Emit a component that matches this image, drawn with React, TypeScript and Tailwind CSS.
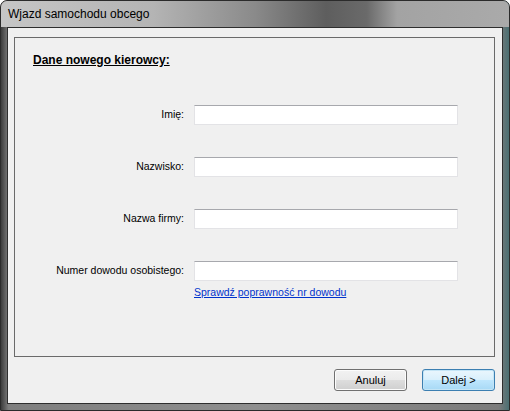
import React from 'react';

const font = { fontFamily: '"Liberation Sans", Arial, sans-serif' };

const Field = ({ label, children }: { label: string; children?: React.ReactNode }) => (
  <div className="flex items-start">
    <div className="w-[169px] h-[20px] flex items-center justify-end text-[10.5px] text-black">{label}</div>
    <div className="ml-[10px] flex flex-col">
      <div className="w-[264px] h-[20px] bg-white border border-[#e3e3e6] border-t-[#a7a8ad]" />
      {children}
    </div>
  </div>
);

const Button = ({ label, primary }: { label: string; primary?: boolean }) => (
  <button
    className={
      'w-[73px] h-[22px] rounded-[3px] border text-[11px] text-black ' +
      (primary
        ? 'border-[#3c7fb1] bg-[linear-gradient(to_bottom,#eaf6fd_0%,#d9f0fc_48%,#bee6fd_52%,#a7d9f5_100%)] shadow-[inset_0_0_0_1px_#c4e5f6]'
        : 'border-[#707070] bg-[linear-gradient(to_bottom,#f2f2f2_0%,#ebebeb_48%,#dddddd_52%,#cfcfcf_100%)] shadow-[inset_0_0_0_1px_#fcfcfc]')
    }
  >
    {label}
  </button>
);

export default function App() {
  return (
    <div style={font} className="w-[510px] h-[411px] overflow-hidden">
      <div className="w-full h-full flex flex-col rounded-t-[7px] border border-[#2b2b2b] bg-[linear-gradient(to_right,#3c3c3c_0%,#7e7e7e_1.5%,#8f8f8f_50%,#7c7c7c_98%,#4a6f72_100%)]">
        {/* title bar */}
        <div className="h-[26px] flex items-center pl-[7px] rounded-t-[6px] bg-[linear-gradient(to_right,#c6c6c6_0%,#b4b4b4_30%,#8a8a8a_50%,#5e5e5e_64%,#6a6a6a_72%,#a3a3a3_78%,#aaaaaa_100%)]">
          <span className="text-[12px] text-black leading-none">Wjazd samochodu obcego</span>
        </div>
        {/* client area */}
        <div className="flex-1 mx-[6px] mb-[6px] border border-[#2e2e2e] bg-[#f0f0f0] pt-[9px] pl-[6px] pr-[7px]">
          <div className="h-[320px] border border-[#6a6a6a] pt-[16px]">
            <div className="pl-[18px] text-[12px] leading-[13px] font-bold underline text-black">Dane nowego kierowcy:</div>
            <div className="mt-[38px] flex flex-col gap-[32px]">
              <Field label="Imię:" />
              <Field label="Nazwisko:" />
              <Field label="Nazwa firmy:" />
              <Field label="Numer dowodu osobistego:">
                <a className="mt-[5px] text-[10.5px] leading-[13px] text-[#0033cc] underline cursor-pointer">
                  Sprawdź poprawność nr dowodu
                </a>
              </Field>
            </div>
          </div>
          <div className="mt-[12px] flex justify-end gap-[15px]">
            <Button label="Anuluj" />
            <Button label="Dalej >" primary />
          </div>
        </div>
      </div>
    </div>
  );
}
